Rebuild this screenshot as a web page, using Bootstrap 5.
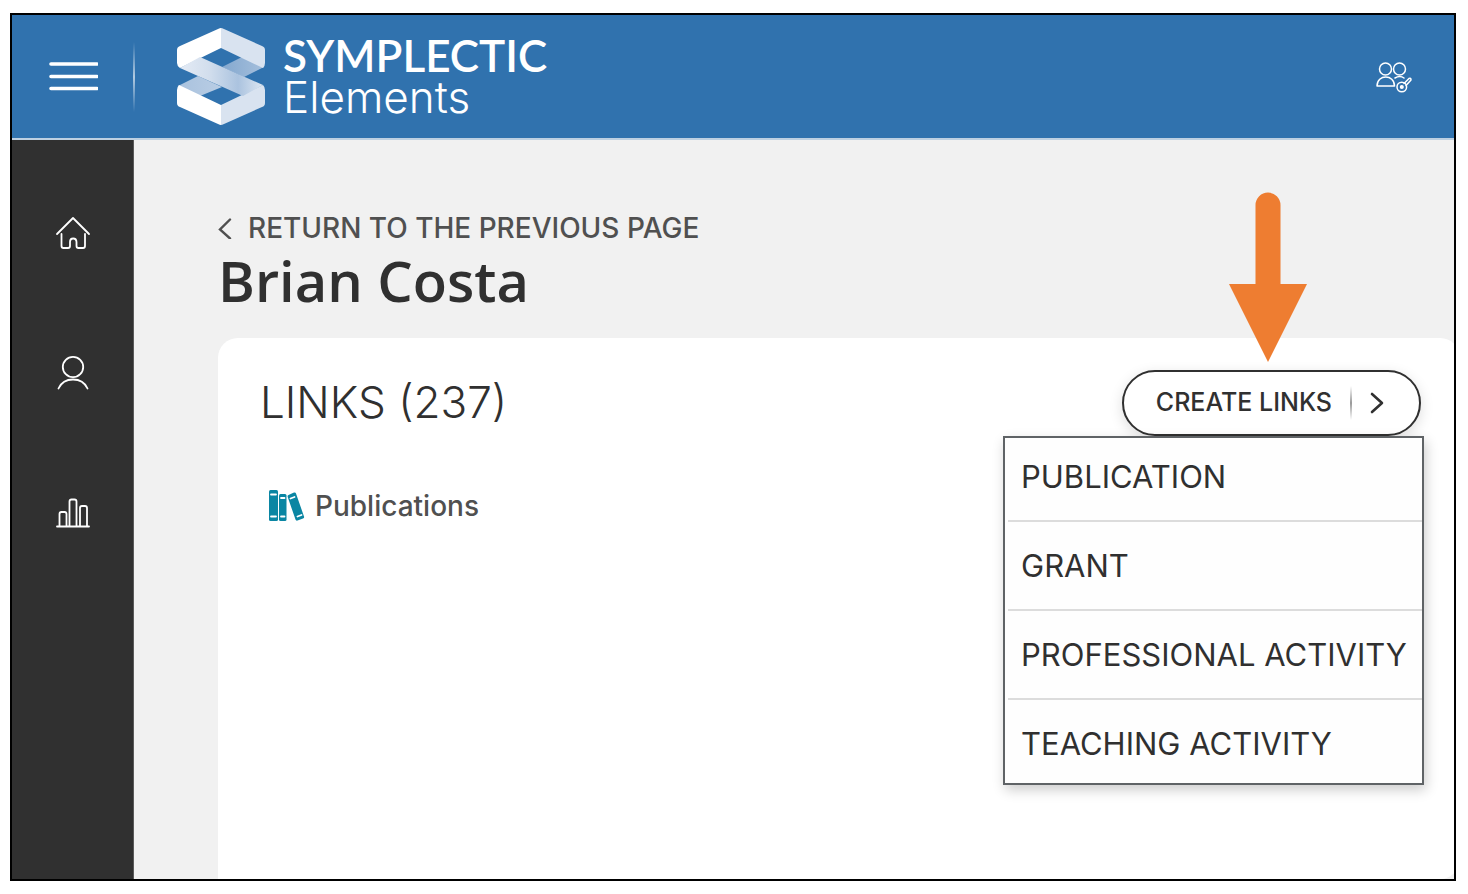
<!DOCTYPE html>
<html lang="en">
<head>
<meta charset="utf-8">
<meta name="viewport" content="width=device-width, initial-scale=1">
<title>Symplectic Elements – Brian Costa</title>
<link href="https://cdn.jsdelivr.net/npm/bootstrap@5.3.0/dist/css/bootstrap.min.css" rel="stylesheet">
<style>
  body { font-family: Inter, sans-serif; color: #303030; background: #fff; }
  svg { display: block; flex: none; }
  .app-frame { min-height: calc(100vh - 26px); margin: 13px 12px 13px 10px; border: 2px solid #000; background: #f1f1f1; }
  .top-bar { height: 125px; background: #3072ae; border-bottom: 2px solid #bdd0e2; padding-left: 36px; padding-right: 42px; }
  .menu-btn, .user-btn { line-height: 0; color: #fff; }
  .bar-rule { width: 2px; height: 70px; margin-left: 35px; margin-right: 42px; background: linear-gradient(#fff0, #ffffffa0, #fff0); }
  .brand-link { gap: 18px; color: #fff; line-height: 42px; font-size: 44px; }
  .brand-text { padding-bottom: 2px; }
  .brand-top { font-family: Lato, sans-serif; font-weight: 600; }
  .brand-sub { font-weight: 300; }
  .side-nav { width: 122px; background: #303030; border-right: 1px solid #5a5a5a; padding-top: 73px; gap: 100px; }
  .side-nav .nav-link { padding: 0; color: #fff; }
  .main-area { min-width: 0; padding: 70px 0 0 84px; }
  .back-link { gap: 16px; color: #505050; font-size: 28px; font-weight: 500; line-height: 36px; }
  .page-title { font-family: "Open Sans", sans-serif; font-size: 56px; font-weight: 600; line-height: 68px; margin: 0 0 24px; }
  .links-panel { background: #fff; border-radius: 20px; border-bottom-left-radius: 0; margin-right: -6px; padding: 32px 39px 0 42px; }
  .panel-title { font-size: 44px; font-weight: 300; line-height: 64px; margin: 0; }
  .create-btn { height: 66px; padding: 0 41px 0 32px; background: #fff; border: 2px solid #303030; border-radius: 33px; color: #303030; font-size: 25px; font-weight: 500; box-shadow: 0 4px 14px #0002; }
  .create-btn:hover { background: #f8f8f8; border-color: #303030; color: #303030; }
  .btn-rule { width: 2px; height: 34px; margin: 0 18px; background: linear-gradient(#aaa0, #999, #aaa0); }
  .create-btn svg { margin-right: -6px; }
  .pointer-arrow { position: absolute; bottom: 100%; left: 107px; margin-bottom: 8px; }
  .create-menu { position: absolute; top: 100%; right: -3px; width: 421px; background: #fefefe; border: 2px solid #5f6366; border-radius: 0; padding-left: 3px; box-shadow: 2px 5px 12px #0003; }
  .create-menu a { display: block; padding: 24px 0 23px 13px; border-bottom: 2px solid #dcdcdc; color: #303030; font-size: 31px; line-height: 40px; text-decoration: none; white-space: nowrap; }
  .create-menu li:first-child a { padding-top: 19px; }
  .create-menu li:last-child a { padding-bottom: 19px; border: 0; }
  .type-link { gap: 10px; margin: 50px 0 0 9px; color: #505050; font-size: 28px; font-weight: 500; line-height: 40px; }
</style>
</head>
<body>
<div class="app-frame d-flex flex-column overflow-hidden">
  <header class="top-bar d-flex align-items-center">
    <button type="button" class="menu-btn btn p-0 border-0" aria-label="Menu">
      <svg width="50" height="30" viewBox="0 0 50 30" stroke="#fff" stroke-width="3.6" stroke-linecap="round"><path d="M3 2h46M3 14.500h46M3 26.500h46"/></svg>
    </button>
    <div class="bar-rule"></div>
    <a href="#" class="brand-link d-flex align-items-center text-decoration-none">
      <svg width="88" height="97" viewBox="0 0 88 97" aria-hidden="true">
        <defs>
          <linearGradient id="band"><stop offset="0" stop-color="#e4ebf5"/><stop offset=".35" stop-color="#d2deed"/><stop offset=".7" stop-color="#abc3df"/><stop offset="1" stop-color="#dce6f1"/></linearGradient>
          <linearGradient id="rearTop"><stop offset="0" stop-color="#84a8cf"/><stop offset="1" stop-color="#a5bfdc"/></linearGradient>
          <linearGradient id="rearLow"><stop offset="0" stop-color="#a9c2de"/><stop offset="1" stop-color="#b9cde4"/></linearGradient>
        </defs>
        <path fill="url(#rearTop)" d="M45 39 65 29 87 39 67 49z"/>
        <path fill="url(#rearLow)" d="M1 58 21 48 45 59 23 68z"/>
        <path fill="#fff" d="M44 0v20L3 40Q0 38 0 35V22Q0 19 3 18L41 1Q43 0 44 0z"/>
        <path fill="#d9e3f0" d="M44 0q1 0 3 1l38 17q3 1 3 4v13q0 3-2 5L44 20z"/>
        <path fill="#fff" d="M44 97V77L2 57q-2 2-2 5v13q0 3 3 4l38 17q2 1 3 1z"/>
        <path fill="#d9e3f0" d="M44 97q1 0 3-1l38-17q3-1 3-4V62q0-3-2-5L44 77z"/>
        <path fill="url(#band)" d="M3 40 23 29 86 57 66 68z"/>
      </svg>
      <span class="brand-text d-flex flex-column"><span class="brand-top">SYMPLECTIC</span><span class="brand-sub">Elements</span></span>
    </a>
    <button type="button" class="user-btn btn p-0 border-0 ms-auto" aria-label="Switch user">
      <svg width="36" height="32" viewBox="0 0 36 32" fill="none" stroke="#fff" stroke-width="1.500" stroke-linecap="round" stroke-linejoin="round"><circle cx="9.500" cy="8" r="6"/><circle cx="23.500" cy="8" r="6"/><path d="M1 25C1 13 18.500 13 18.500 25zM19 17q5-3 9 0M28 22.500l5-5q2-1 2 1.500l-5 5.500"/><circle cx="25.800" cy="26" r="4.800"/><circle cx="25.800" cy="26" r="1.300" fill="#fff"/></svg>
    </button>
  </header>
  <div class="d-flex flex-grow-1">
    <nav class="side-nav nav flex-column flex-nowrap align-items-center flex-shrink-0" aria-label="Main">
      <a class="nav-link" href="#" aria-label="Home"><svg width="40" height="40" viewBox="0 0 40 40" fill="none" stroke="#fff" stroke-width="1.800" stroke-linecap="round" stroke-linejoin="round"><path d="M4 21 20 5l16 16M8.500 21v12q0 2 2 2H15q2 0 2-2v-4q0-3.500 3.200-3.500T23.500 29v4q0 2 2 2H30q2 0 2-2V21"/></svg></a>
      <a class="nav-link" href="#" aria-label="Profile"><svg width="40" height="40" viewBox="0 0 40 40" fill="none" stroke="#fff" stroke-width="1.800" stroke-linecap="round"><circle cx="20" cy="14" r="10.200"/><path d="M5.500 35.500C11 23.500 29 23.500 34.500 35.500"/></svg></a>
      <a class="nav-link" href="#" aria-label="Reports"><svg width="40" height="40" viewBox="0 0 40 40" fill="none" stroke="#fff" stroke-width="1.800" stroke-linecap="round"><path d="M4 33.500h32M6.500 33V21q0-2 2-2h3q2 0 2 2v12M16.500 33V8.500q0-2 2-2h3q2 0 2 2V33M27 33V15q0-2 2-2h3q2 0 2 2v18"/></svg></a>
    </nav>
    <main class="main-area flex-grow-1 d-flex flex-column">
      <a href="#" class="back-link d-flex align-items-center align-self-start text-decoration-none">
        <svg width="14" height="22" viewBox="0 0 14 22" fill="none" stroke="#505050" stroke-width="2.400" stroke-linecap="round"><path d="M12 2.500 2 12.500l10 9"/></svg>
        RETURN TO THE PREVIOUS PAGE
      </a>
      <h1 class="page-title">Brian Costa</h1>
      <section class="links-panel flex-grow-1">
        <div class="d-flex justify-content-between">
          <h2 class="panel-title">LINKS (237)</h2>
          <div class="position-relative">
            <svg class="pointer-arrow" width="78" height="170" viewBox="0 0 78 170" fill="#ee7d31" aria-hidden="true"><path d="M26.500 92V13a12.500 12.500 0 0 1 25 0v79H78L39 170 0 92z"/></svg>
            <button type="button" class="create-btn btn d-flex align-items-center" aria-expanded="true">
              CREATE LINKS
              <span class="btn-rule"></span>
              <svg width="14" height="22" viewBox="0 0 14 22" fill="none" stroke="#303030" stroke-width="2.600" stroke-linecap="round" stroke-linejoin="round"><path d="m2 2 10 9L2 20"/></svg>
            </button>
            <ul class="create-menu list-unstyled mb-0">
              <li><a href="#">PUBLICATION</a></li>
              <li><a href="#">GRANT</a></li>
              <li><a href="#">PROFESSIONAL ACTIVITY</a></li>
              <li><a href="#">TEACHING ACTIVITY</a></li>
            </ul>
          </div>
        </div>
        <a href="#" class="type-link d-inline-flex align-items-center text-decoration-none">
          <svg width="36" height="32" viewBox="0 0 36 32" aria-hidden="true"><g fill="#0a86a3"><rect width="9" height="31" rx="1.500"/><rect x="10" y="4" width="7.500" height="27" rx="1.500"/><path d="m19.500 5 5.500-2.500q1.500-.5 2 1l8 23q.5 1.500-1 2l-5.500 2q-1.500.5-2-1L18.700 7q-.5-1.500.8-2z"/></g><path stroke="#fff" stroke-width="1.800" stroke-linecap="round" d="M2 4.500h5M2 26.500h5M12 8h3.500M12 26.500h3.500M21.500 8.500l4-1.500M28.500 26.500l4-1.500"/></svg>
          Publications
        </a>
      </section>
    </main>
  </div>
</div>
<script src="https://cdn.jsdelivr.net/npm/bootstrap@5.3.0/dist/js/bootstrap.bundle.min.js"></script>
</body>
</html>
